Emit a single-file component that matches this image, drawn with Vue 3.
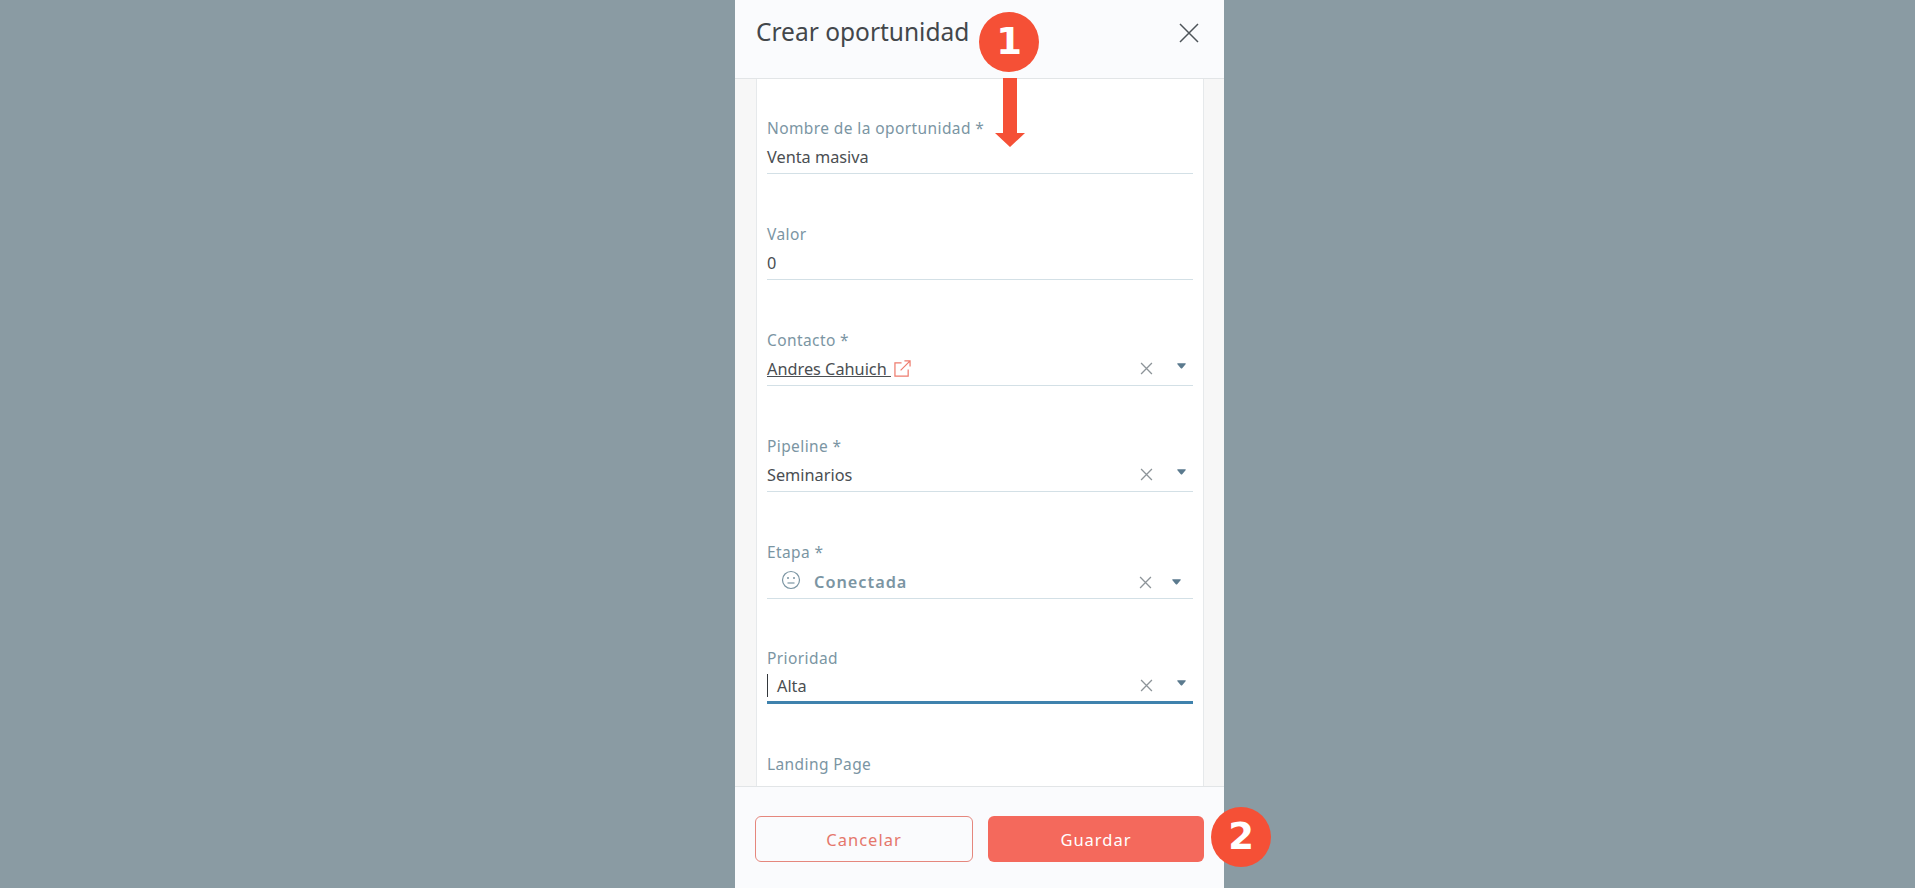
<template>
  <div class="page">
    <div class="panel">
      <header class="panel-header">
        <h1>Crear oportunidad</h1>
        <svg class="close" viewBox="0 0 20 20" width="20" height="20">
          <path d="M1 1 L19 19 M19 1 L1 19" stroke="#4d5459" stroke-width="1.5" fill="none" />
        </svg>
      </header>

      <div class="panel-body">
        <div class="form-card">
          <div v-for="field in fields" :key="field.label" class="field" :class="field.kind">
            <label>{{ field.label }}</label>
            <div class="control">
              <svg v-if="field.kind === 'stage'" class="smile" viewBox="0 0 20 20" width="20" height="20">
                <circle cx="10" cy="10" r="8.5" stroke="#7b95a3" stroke-width="1.2" fill="none" />
                <circle cx="7" cy="8" r="1" fill="#7b95a3" />
                <circle cx="13" cy="8" r="1" fill="#7b95a3" />
                <path d="M6.5 13 H13.5" stroke="#7b95a3" stroke-width="1.2" />
              </svg>
              <span v-if="field.kind === 'focused'" class="caret"></span>
              <span class="value" :class="{ link: field.link }">{{ field.value }}</span>
              <svg v-if="field.link" class="ext" viewBox="0 0 18 18" width="17" height="17">
                <path d="M8 3 H1 V17 H15 V10 M7 11 L16.5 1.5 M11 1 H17 V7" stroke="#ee7b6d" stroke-width="1.3" fill="none" />
              </svg>
              <template v-if="field.select">
                <svg class="clear" viewBox="0 0 12 12" width="13" height="13">
                  <path d="M1 1 L11 11 M11 1 L1 11" stroke="#8d9499" stroke-width="1.2" fill="none" />
                </svg>
                <svg class="arrow" viewBox="0 0 10 6" width="9" height="6">
                  <path d="M0 0.5 Q0 0 1 0 H9 Q10 0 10 0.5 L6 5.2 Q5 6.4 4 5.2 Z" fill="#5b7a8e" />
                </svg>
              </template>
            </div>
          </div>
        </div>
      </div>

      <footer class="panel-footer">
        <button class="btn cancel">Cancelar</button>
        <button class="btn save">Guardar</button>
      </footer>

      <div class="badge one">1</div>
      <svg class="down-arrow" viewBox="0 0 30 70" width="30" height="70">
        <path d="M8 0 H22 V55 H30 L15 69 L0 55 H8 Z" fill="#f55036" />
      </svg>
      <div class="badge two">2</div>
    </div>
  </div>
</template>

<script setup>
const fields = [
  { label: 'Nombre de la oportunidad *', value: 'Venta masiva', kind: 'text' },
  { label: 'Valor', value: '0', kind: 'text' },
  { label: 'Contacto *', value: 'Andres Cahuich ', kind: 'text', select: true, link: true },
  { label: 'Pipeline *', value: 'Seminarios', kind: 'text', select: true },
  { label: 'Etapa *', value: 'Conectada', kind: 'stage', select: true },
  { label: 'Prioridad', value: 'Alta', kind: 'focused', select: true },
  { label: 'Landing Page', value: 'Seleccionar', kind: 'placeholder' }
]
</script>

<style>
html, body {
  margin: 0;
  height: 100%;
  overflow: hidden;
  background: #8a9ba3;
}
</style>

<style scoped>
.page {
  height: 888px;
  padding-left: 735px;
  background: #8a9ba3;
  font-family: "Noto Sans", "Open Sans", sans-serif;
}

.panel {
  position: relative;
  width: 489px;
  height: 888px;
  display: flex;
  flex-direction: column;
  background: #f7f7f7;
}

.panel-header {
  flex: 0 0 79px;
  box-sizing: border-box;
  display: flex;
  align-items: flex-start;
  justify-content: space-between;
  padding: 16px 25px 0 21px;
  background: #fafbfd;
  border-bottom: 1px solid #e2e5e7;
}

.panel-header h1 {
  margin: 0;
  font-size: 24.5px;
  line-height: 32px;
  font-weight: 400;
  color: #43474b;
}

.close {
  margin-top: 7px;
}

.panel-body {
  flex: 1;
  min-height: 0;
  overflow: hidden;
  padding: 0 20px 0 21px;
}

.form-card {
  height: 100%;
  box-sizing: border-box;
  padding: 38px 10px 0;
  background: #fff;
  border-left: 1px solid #e6e9eb;
  border-right: 1px solid #e6e9eb;
}

.field {
  height: 106px;
  box-sizing: border-box;
}

.field label {
  display: block;
  height: 23px;
  font-size: 15.5px;
  line-height: 22px;
  letter-spacing: 0.4px;
  color: #7b95a3;
}

.control {
  display: flex;
  align-items: center;
  height: 34px;
  box-sizing: border-box;
  border-bottom: 1px solid #d3e0e6;
  color: #4a4e52;
  font-size: 16.3px;
}

.value {
  white-space: pre;
}

.value.link {
  text-decoration: underline;
}

.ext {
  margin-left: 3px;
}

.clear {
  margin-left: auto;
}

.arrow {
  margin: 0 7px 6px 24px;
}

.stage .control {
  height: 35px;
  padding: 2px 0 0 14px;
}

.stage .value {
  margin-left: 13px;
  font-weight: 600;
  color: #7b95a3;
  letter-spacing: 1px;
}

.stage .smile {
  margin-bottom: 4px;
}

.stage .arrow {
  margin: 0 12px 0 20px;
}

.focused .control {
  border-bottom: 3px solid #3f82ad;
}

.caret {
  width: 1px;
  height: 23px;
  margin-right: 9px;
  background: #33383c;
}

.placeholder .control {
  color: #a9b4ba;
  border: 0;
}

.panel-footer {
  flex: 0 0 102px;
  box-sizing: border-box;
  display: flex;
  gap: 15px;
  padding: 29px 20px 0 20px;
  background: #fafbfd;
  border-top: 1px solid #e2e5e7;
}

.btn {
  flex: 1;
  height: 46px;
  border-radius: 6px;
  font-family: inherit;
  font-size: 16.5px;
  letter-spacing: 1px;
}

.cancel {
  background: transparent;
  border: 1px solid #e5877d;
  color: #e5776b;
}

.save {
  background: #f4695c;
  border: 0;
  color: #fff;
}

.badge {
  position: absolute;
  width: 60px;
  height: 60px;
  border-radius: 50%;
  background: #f55036;
  color: #fff;
  font-family: "DejaVu Sans", sans-serif;
  font-size: 37px;
  font-weight: 700;
  line-height: 60px;
  text-align: center;
}

.badge.one {
  left: 244px;
  top: 12px;
}

.badge.two {
  left: 476px;
  top: 807px;
}

.down-arrow {
  position: absolute;
  left: 260px;
  top: 78px;
}
</style>
